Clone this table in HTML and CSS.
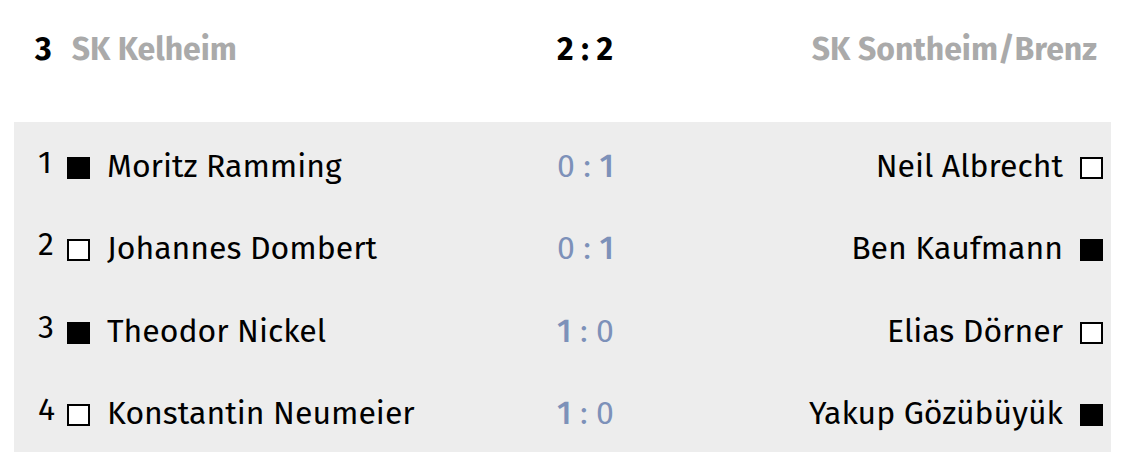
FILE: index.html
```html
<!DOCTYPE html>
<html lang="de">
<head>
<meta charset="utf-8">
<link rel="stylesheet" href="styles.css">
</head>
<body>
<div class="match">
  <div class="head">
    <div class="side left"><span class="rank">3</span><span class="team">SK Kelheim</span></div>
    <div class="total">2 : 2</div>
    <div class="side right"><span class="team">SK Sontheim/Brenz</span></div>
  </div>
  <div class="boards">
    <div class="row">
      <div class="side left"><span class="no">1</span><span class="sq black"></span><span class="name">Moritz Ramming</span></div>
      <div class="score"><span>0</span> : <span class="win">1</span></div>
      <div class="side right"><span class="name">Neil Albrecht</span><span class="sq white"></span></div>
    </div>
    <div class="row">
      <div class="side left"><span class="no">2</span><span class="sq white"></span><span class="name">Johannes Dombert</span></div>
      <div class="score"><span>0</span> : <span class="win">1</span></div>
      <div class="side right"><span class="name">Ben Kaufmann</span><span class="sq black"></span></div>
    </div>
    <div class="row">
      <div class="side left"><span class="no">3</span><span class="sq black"></span><span class="name">Theodor Nickel</span></div>
      <div class="score"><span class="win">1</span> : <span>0</span></div>
      <div class="side right"><span class="name">Elias Dörner</span><span class="sq white"></span></div>
    </div>
    <div class="row">
      <div class="side left"><span class="no">4</span><span class="sq white"></span><span class="name">Konstantin Neumeier</span></div>
      <div class="score"><span class="win">1</span> : <span>0</span></div>
      <div class="side right"><span class="name">Yakup Gözübüyük</span><span class="sq black"></span></div>
    </div>
  </div>
</div>
</body>
</html>
```
FILE: styles.css
```css
html, body {
  margin: 0;
  padding: 0;
  background: #ffffff;
}
body {
  font-family: "Fira Sans", "Open Sans", sans-serif;
  font-size: 32px;
  color: #000;
}
.match {
  padding: 0 17px 0 14px;
}
.head {
  display: grid;
  grid-template-columns: 543px auto 1fr;
  align-items: center;
  height: 98px;
  font-weight: 700;
}
.head .left {
  padding-left: 21px;
}
.head .right {
  justify-content: flex-end;
  padding-right: 14px;
}
.rank {
  color: #000;
  margin-right: 20px;
}
.team {
  color: #aaaaaa;
}
.total {
  color: #000;
}
.boards {
  margin-top: 24px;
  background: #ededed;
  padding: 0 8px 0 0;
}
.row {
  display: grid;
  grid-template-columns: 543px auto 1fr;
  align-items: center;
  box-sizing: border-box;
  height: 82.5px;
  padding-top: 5px;
}
.side {
  display: flex;
  align-items: center;
}
.row .left {
  padding-left: 24px;
}
.row .right {
  justify-content: flex-end;
}
.no {
  position: relative;
  top: -4px;
  width: 29px;
}
.sq {
  box-sizing: border-box;
  width: 23px;
  height: 22px;
  border: 2px solid #000;
  flex: none;
  position: relative;
  top: 2px;
}
.sq.black {
  background: #000;
}
.sq.white {
  background: #fff;
}
.left .sq {
  margin-right: 17px;
}
.right .sq {
  margin-left: 17px;
}
.score {
  color: #7d91b9;
}
.score .win {
  font-weight: 500;
}
```
